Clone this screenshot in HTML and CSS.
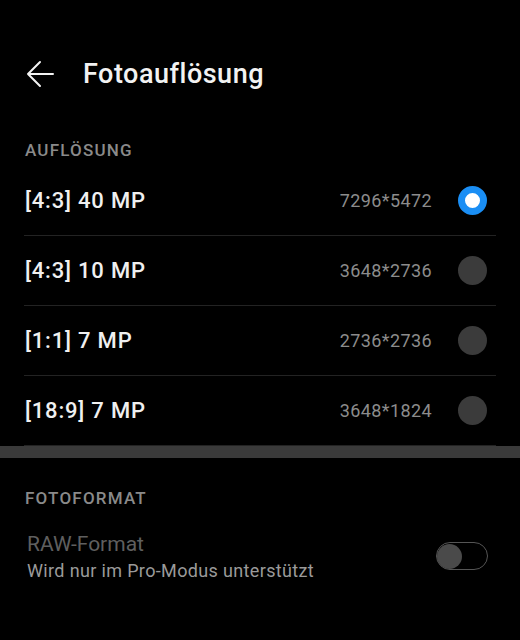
FILE: index.html
```html
<!DOCTYPE html>
<html lang="de">
<head>
<meta charset="utf-8">
<link rel="stylesheet" href="styles.css">
</head>
<body>
<header class="topbar">
  <svg class="back" width="28" height="28" viewBox="0 0 28 28" fill="none" stroke="#f2f2f2" stroke-width="2" stroke-linecap="round" stroke-linejoin="round"><path d="M27 14H2M14 2L2 14L14 26"/></svg>
  <h1 class="title">Fotoauflösung</h1>
</header>

<div class="section-label first">AUFLÖSUNG</div>
<ul class="list">
  <li class="row"><span class="label">[4:3] 40 MP</span><span class="res">7296*5472</span><span class="radio on"></span></li>
  <li class="row"><span class="label">[4:3] 10 MP</span><span class="res">3648*2736</span><span class="radio"></span></li>
  <li class="row"><span class="label">[1:1] 7 MP</span><span class="res">2736*2736</span><span class="radio"></span></li>
  <li class="row"><span class="label">[18:9] 7 MP</span><span class="res">3648*1824</span><span class="radio"></span></li>
</ul>
<div class="divider"></div>

<div class="section-label second">FOTOFORMAT</div>
<div class="setting">
  <div class="setting-text">
    <div class="setting-title">RAW-Format</div>
    <div class="setting-sub">Wird nur im Pro-Modus unterstützt</div>
  </div>
  <span class="switch"><span class="knob"></span></span>
</div>
</body>
</html>
```
FILE: styles.css
```css
html, body {
  margin: 0;
  padding: 0;
  background: #000;
}
body {
  width: 520px;
  height: 640px;
  overflow: hidden;
  font-family: Roboto, "Noto Sans", sans-serif;
}
.topbar {
  display: flex;
  align-items: center;
  height: 36px;
  padding: 56px 0 0 26px;
}
.back {
  display: block;
  flex: none;
}
.title {
  margin: 0 0 0 29px;
  font-family: Roboto, sans-serif;
  font-weight: 500;
  font-size: 27px;
  letter-spacing: 0.5px;
  line-height: 36px;
  color: #f2f2f2;
}
.section-label {
  font-family: Roboto, sans-serif;
  font-weight: 500;
  font-size: 17px;
  letter-spacing: 1.2px;
  line-height: 20px;
  color: #8a8a8a;
  padding-left: 25px;
}
.section-label.first {
  margin-top: 48px;
  padding-bottom: 6px;
}
.section-label.second {
  margin-top: 30px;
}
.list {
  list-style: none;
  margin: 0;
  padding: 0;
}
.row {
  display: flex;
  align-items: center;
  height: 69px;
  margin: 0 24px;
  border-bottom: 1px solid #232323;
}
.label {
  flex: 1;
  padding-left: 1px;
  font-family: Roboto, sans-serif;
  font-weight: 500;
  font-size: 22px;
  letter-spacing: 0.8px;
  color: #f0f0f0;
}
.res {
  font-size: 18px;
  letter-spacing: 0.4px;
  color: #8c8c8c;
  margin-right: 26px;
}
.radio {
  flex: none;
  width: 29px;
  height: 29px;
  border-radius: 50%;
  background: #3b3b3b;
  box-sizing: border-box;
  margin-right: 9px;
}
.radio.on {
  background: #fff;
  border: 7px solid #1a8ef4;
}
.divider {
  height: 12px;
  background: #3a3a3a;
}
.setting {
  display: flex;
  align-items: flex-start;
  padding: 24px 32px 0 27px;
}
.setting-text {
  flex: 1;
}
.setting-title {
  font-size: 21px;
  line-height: 24px;
  color: #5f5f5f;
}
.setting-sub {
  margin-top: 4px;
  font-size: 18px;
  letter-spacing: 0.35px;
  line-height: 22px;
  color: #9a9a9a;
}
.switch {
  flex: none;
  margin-top: 10px;
  width: 52px;
  height: 28px;
  box-sizing: border-box;
  border: 1.5px solid #555;
  border-radius: 14px;
  padding: 0;
  display: flex;
  align-items: center;
}
.knob {
  width: 25px;
  height: 25px;
  border-radius: 50%;
  background: #4a4a4a;
}
```
